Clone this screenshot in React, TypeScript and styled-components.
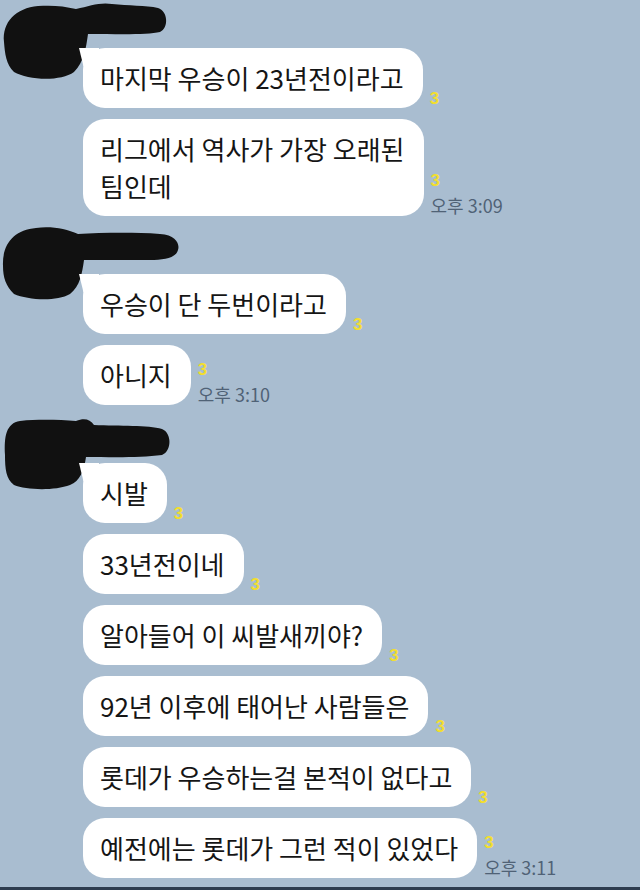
import React from 'react';
import styled, { createGlobalStyle, css } from 'styled-components';

const GlobalStyle = createGlobalStyle`
  html, body { margin: 0; padding: 0; }
  body { background: #a9bdd0; }
`;

const Page = styled.div`
  width: 640px;
  height: 890px;
  overflow: hidden;
  background: #a9bdd0;
  display: flex;
  flex-direction: column;
  font-family: "Noto Sans CJK KR", "Noto Sans", sans-serif;
`;

const Feed = styled.div`
  flex: 1;
  display: flex;
  flex-direction: column;
  gap: 10px;
`;

const BottomBar = styled.div`
  height: 3px;
  background: #2e3d4f;
`;

const Group = styled.section`
  position: relative;
  padding-top: 48px;
`;

const Redaction = styled.svg`
  position: absolute;
  top: 0;
  left: 0;
  width: 190px;
  height: 82px;
  pointer-events: none;
  overflow: visible;
`;

const Messages = styled.div`
  display: flex;
  flex-direction: column;
  align-items: flex-start;
  gap: 11px;
  padding-left: 83px;
`;

const Row = styled.div`
  display: flex;
  align-items: flex-end;
`;

const Bubble = styled.div<{ $first: boolean }>`
  position: relative;
  background: #ffffff;
  border-radius: 22px;
  padding: 11px 19px 12px 17px;
  font-size: 26px;
  line-height: 37px;
  color: #151515;
  white-space: pre-line;
  ${(p) =>
    p.$first &&
    css`
      &::before {
        content: '';
        position: absolute;
        left: -4px;
        top: 0;
        width: 20px;
        height: 18px;
        background: #ffffff;
        clip-path: polygon(0 0, 100% 0, 100% 100%, 22% 100%);
      }
    `}
`;

const Meta = styled.div`
  display: flex;
  flex-direction: column;
  align-items: flex-start;
  margin-left: 7px;
  padding-bottom: 0;
`;

const ReadCount = styled.span`
  font-size: 17px;
  font-weight: 700;
  line-height: 19px;
  color: #f2de30;
  font-family: "Liberation Sans", "Noto Sans", sans-serif;
`;

const Time = styled.span`
  margin-top: 5px;
  font-size: 18px;
  line-height: 21px;
  color: #506276;
  white-space: nowrap;
  font-family: "Noto Sans CJK KR", "Noto Sans", sans-serif;
`;

type Msg = { text: string; time?: string };
type G = { path: string; messages: Msg[] };

const groups: G[] = [
  {
    path:
      'M 4 42 C 2 22 16 8 38 6 C 52 5 64 6 76 9 C 90 6 100 2 112 4 C 128 6 146 5 158 8 C 168 11 169 28 160 32 C 148 35 120 34 88 34 C 86 48 84 62 74 72 C 60 82 28 80 14 72 C 6 64 5 54 4 42 Z',
    messages: [
      { text: '마지막 우승이 23년전이라고' },
      { text: '리그에서 역사가 가장 오래된\n팀인데', time: '오후 3:09' },
    ],
  },
  {
    path:
      'M 3 40 C 2 18 14 4 36 2 C 52 0 66 3 78 8 C 100 7 130 6 160 8 C 176 9 180 18 178 24 C 176 32 164 34 150 34 L 84 34 C 82 48 80 60 70 68 C 56 76 28 74 14 68 C 6 60 3 52 3 40 Z',
    messages: [
      { text: '우승이 단 두번이라고' },
      { text: '아니지', time: '오후 3:10' },
    ],
  },
  {
    path:
      'M 5 40 C 4 22 6 8 20 6 C 40 4 60 5 76 6 C 84 3 90 4 94 10 C 120 11 148 10 162 14 C 172 18 172 36 162 40 C 140 43 110 42 86 42 C 84 56 80 66 70 70 C 54 76 26 75 14 70 C 6 64 5 54 5 40 Z',
    messages: [
      { text: '시발' },
      { text: '33년전이네' },
      { text: '알아들어 이 씨발새끼야?' },
      { text: '92년 이후에 태어난 사람들은' },
      { text: '롯데가 우승하는걸 본적이 없다고' },
      { text: '예전에는 롯데가 그런 적이 있었다', time: '오후 3:11' },
    ],
  },
];

export default function App() {
  return (
    <>
      <GlobalStyle />
      <Page>
        <Feed>
          {groups.map((g, gi) => (
            <Group key={gi}>
              <Redaction viewBox="0 0 190 82">
                <path d={g.path} fill="#111111" />
              </Redaction>
              <Messages>
                {g.messages.map((m, mi) => (
                  <Row key={mi}>
                    <Bubble $first={mi === 0}>{m.text}</Bubble>
                    <Meta>
                      <ReadCount>3</ReadCount>
                      {m.time && <Time>{m.time}</Time>}
                    </Meta>
                  </Row>
                ))}
              </Messages>
            </Group>
          ))}
        </Feed>
        <BottomBar />
      </Page>
    </>
  );
}
